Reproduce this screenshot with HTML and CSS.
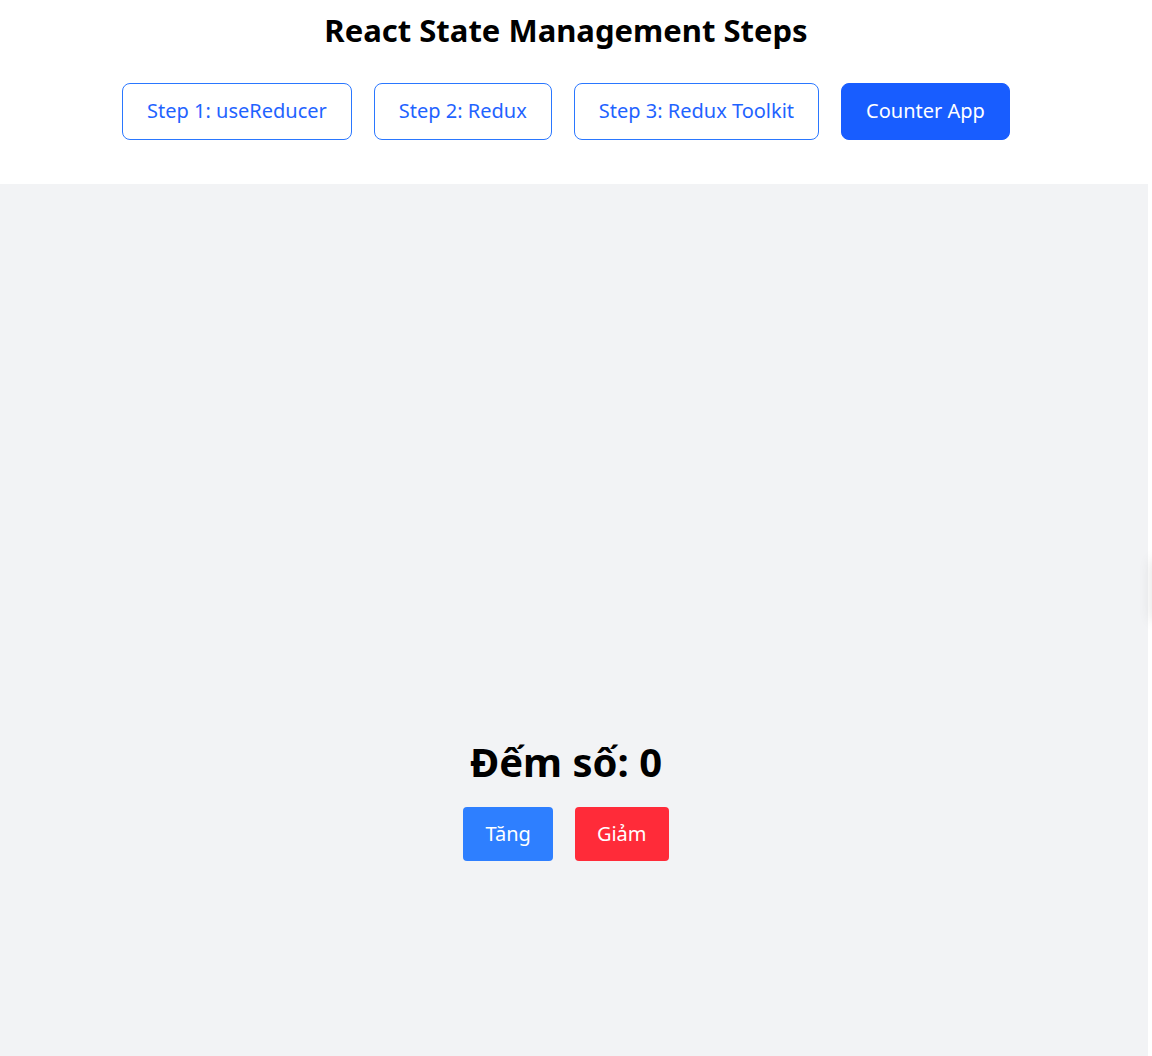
FILE: index.html
```html
<!DOCTYPE html>
<html lang="vi">
<head>
<meta charset="utf-8">
<title>React State Management Steps</title>
<link rel="stylesheet" href="styles.css">
</head>
<body>
  <header class="top">
    <h1 class="title">React State Management Steps</h1>
    <nav class="steps">
      <button class="step">Step 1: useReducer</button>
      <button class="step">Step 2: Redux</button>
      <button class="step">Step 3: Redux Toolkit</button>
      <button class="step step-active">Counter App</button>
    </nav>
  </header>
  <main class="stage">
    <section class="counter">
      <h2 class="count">Đếm số: 0</h2>
      <div class="actions">
        <button class="act act-inc">Tăng</button>
        <button class="act act-dec">Giảm</button>
      </div>
    </section>
  </main>
  <div class="edge-shadow"></div>
</body>
</html>
```
FILE: styles.css
```css
* { box-sizing: border-box; }
html, body { margin: 0; padding: 0; }
body {
  font-family: "Segoe UI", "Noto Sans", "Open Sans", sans-serif;
  background: #ffffff;
  color: #000;
  overflow: hidden;
  height: 1056px;
  position: relative;
}
.top {
  width: 1132px;
  padding-top: 12px;
  height: 184px;
}
.title {
  margin: 0;
  font-size: 31px;
  line-height: 37px;
  font-weight: 700;
  text-align: center;
}
.steps {
  margin-top: 34px;
  display: flex;
  justify-content: center;
  gap: 22px;
}
.step {
  font-family: inherit;
  font-size: 20px;
  line-height: 30px;
  padding: 12px 24px 13px;
  border: 1px solid #2a77ff;
  border-radius: 8px;
  background: #fff;
  color: #1f63ff;
  cursor: pointer;
}
.step-active {
  background: #185dff;
  border-color: #185dff;
  color: #fff;
}
.stage {
  width: 1148px;
  height: 872px;
  background: #f2f3f5;
  padding-top: 554px;
}
.counter {
  width: 1132px;
  display: flex;
  flex-direction: column;
  align-items: center;
}
.count {
  margin: 0;
  font-size: 40px;
  line-height: 48px;
  font-weight: 700;
}
.actions {
  margin-top: 21px;
  display: flex;
  gap: 22px;
}
.act {
  font-family: inherit;
  font-size: 20px;
  line-height: 30px;
  padding: 12px 22px;
  border: none;
  border-radius: 4px;
  color: #fff;
  cursor: pointer;
}
.act-inc { background: #2e7fff; }
.act-dec { background: #ff2b39; }
.edge-shadow {
  position: absolute;
  right: -40px;
  top: 560px;
  width: 40px;
  height: 60px;
  box-shadow: 0 0 14px rgba(0,0,0,0.12);
  background: #fff;
}
```
